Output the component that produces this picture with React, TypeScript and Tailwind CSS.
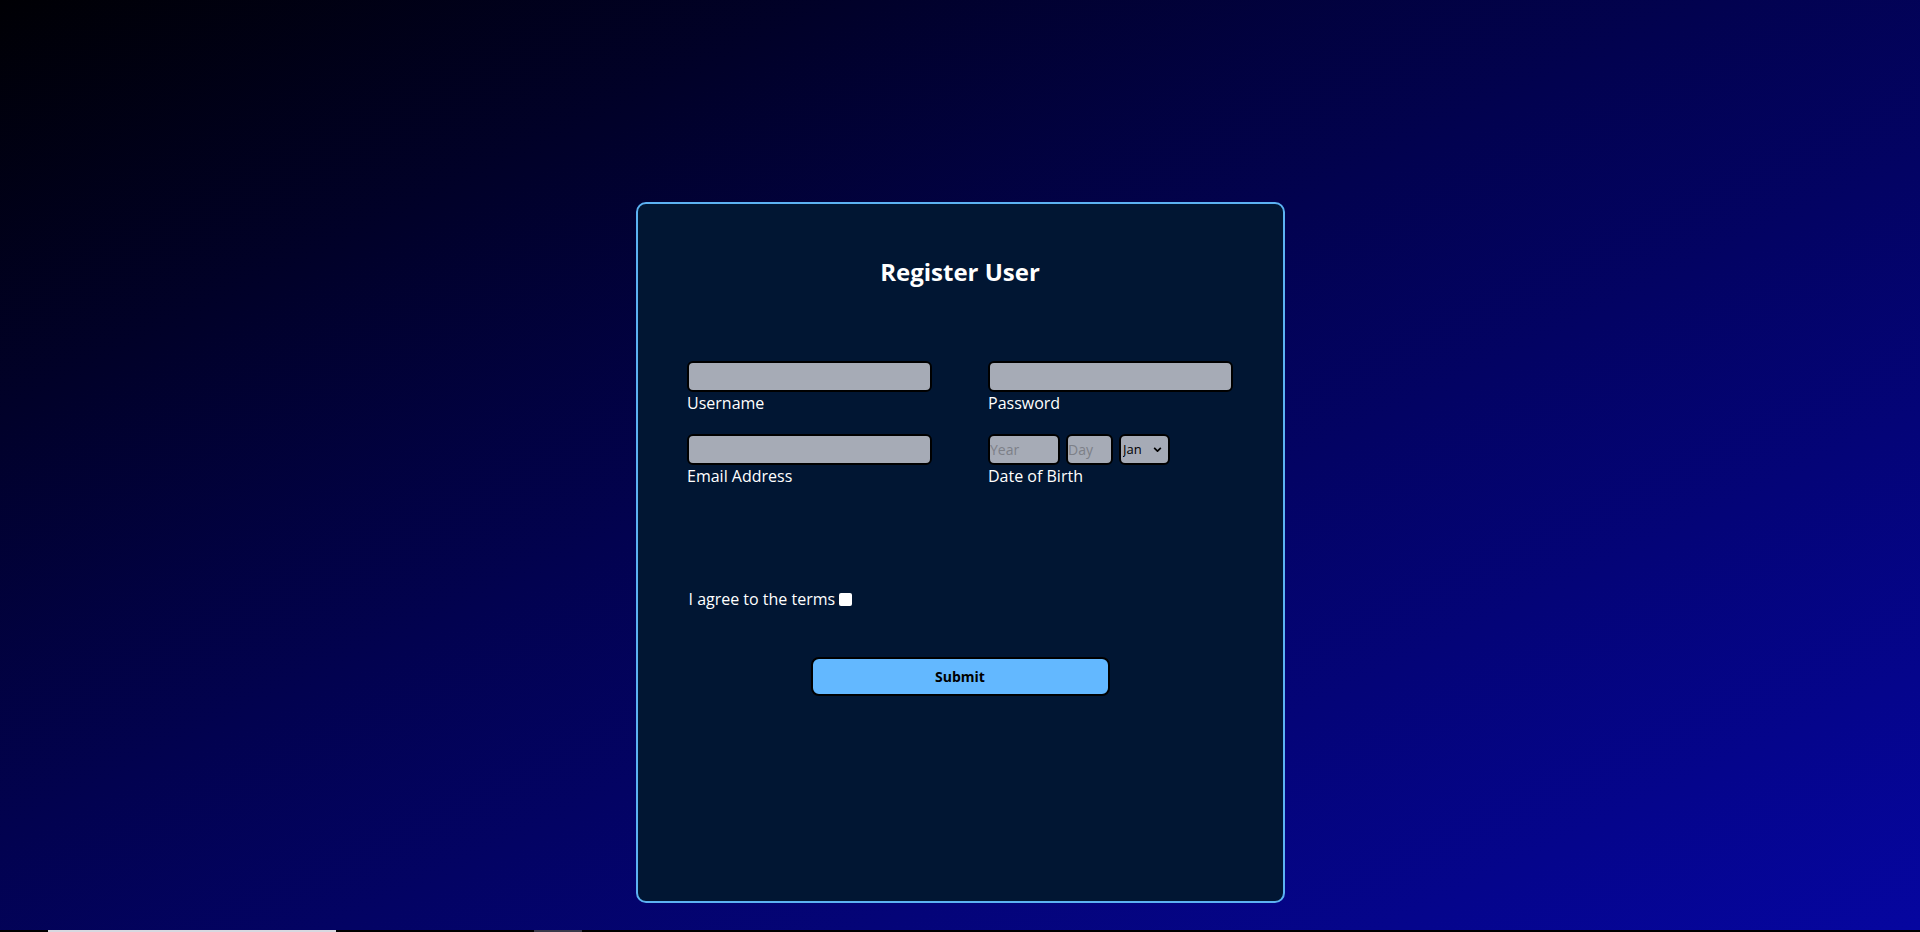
import { useState } from "react";

const months = ["Jan", "Feb", "Mar", "Apr", "May", "Jun", "Jul", "Aug", "Sep", "Oct", "Nov", "Dec"];

const inputClass =
  "h-[31px] w-full rounded-[6px] border-2 border-black bg-[#a6abb6] px-1 text-[14px] text-black outline-none placeholder:text-[#7d8088]";

function Field({ label, type = "text" }: { label: string; type?: string }) {
  return (
    <div className="flex flex-col">
      <input type={type} className={inputClass} />
      <span className="text-[16px] leading-[22px] text-white">{label}</span>
    </div>
  );
}

export default function App() {
  const [agreed, setAgreed] = useState(false);
  const [month, setMonth] = useState("Jan");

  return (
    <div
      className="flex h-[932px] w-full flex-col overflow-hidden bg-[linear-gradient(to_bottom_right,#000004,#020250_45%,#0606a0)]"
      style={{ fontFamily: '"Open Sans", "Noto Sans", sans-serif' }}
    >
      <div className="flex flex-1 justify-center pt-[202px]">
        <form
          className="flex h-[701px] w-[649px] flex-col rounded-[10px] border-2 border-[#5cb2f2] bg-[#011633] px-[48px] pt-[52px]"
          onSubmit={(e) => e.preventDefault()}
        >
          <h1 className="text-center text-[24px] font-bold leading-[32px] text-white">Register User</h1>

          <div className="mt-[73px] grid grid-cols-[245px_245px] gap-x-[56px] gap-y-[20px] self-center">
            <Field label="Username" />
            <Field label="Password" type="password" />
            <Field label="Email Address" type="email" />
            <div className="flex flex-col">
              <div className="flex items-start gap-[6px]">
                <input placeholder="Year" className={`${inputClass} !w-[72px] !px-0`} />
                <input placeholder="Day" className={`${inputClass} !w-[47px] !px-0`} />
                <div className="relative h-[31px] w-[51px]">
                  <select
                    value={month}
                    onChange={(e) => setMonth(e.target.value)}
                    className="h-full w-full appearance-none rounded-[6px] border-2 border-black bg-[#a6abb6] pl-[2px] text-[13px] text-black outline-none"
                  >
                    {months.map((m) => (
                      <option key={m}>{m}</option>
                    ))}
                  </select>
                  <svg
                    viewBox="0 0 10 6"
                    className="pointer-events-none absolute right-[8px] top-[13px] h-[5px] w-[9px]"
                  >
                    <path d="M1 1l4 4 4-4" fill="none" stroke="black" strokeWidth="2" />
                  </svg>
                </div>
              </div>
              <span className="text-[16px] leading-[22px] text-white">Date of Birth</span>
            </div>
          </div>

          <label className="ml-[3px] mt-[101px] flex items-center gap-[4px] self-start text-[16px] leading-[22px] text-white">
            I agree to the terms
            <input
              type="checkbox"
              checked={agreed}
              onChange={() => setAgreed((v) => !v)}
              className="h-[13px] w-[13px] appearance-none rounded-[2px] bg-white checked:bg-[#63b8ff]"
            />
          </label>

          <button
            type="submit"
            className="mt-[47px] h-[39px] w-[299px] self-center rounded-[8px] border-2 border-black bg-[#63b8ff] text-[14px] font-bold text-black"
          >
            Submit
          </button>
        </form>
      </div>
      <div className="flex h-[2px] w-full bg-black">
        <div className="ml-[48px] w-[288px] bg-[#d8d8e0]" />
        <div className="ml-[198px] w-[48px] bg-[#3a3a4a]" />
      </div>
    </div>
  );
}
